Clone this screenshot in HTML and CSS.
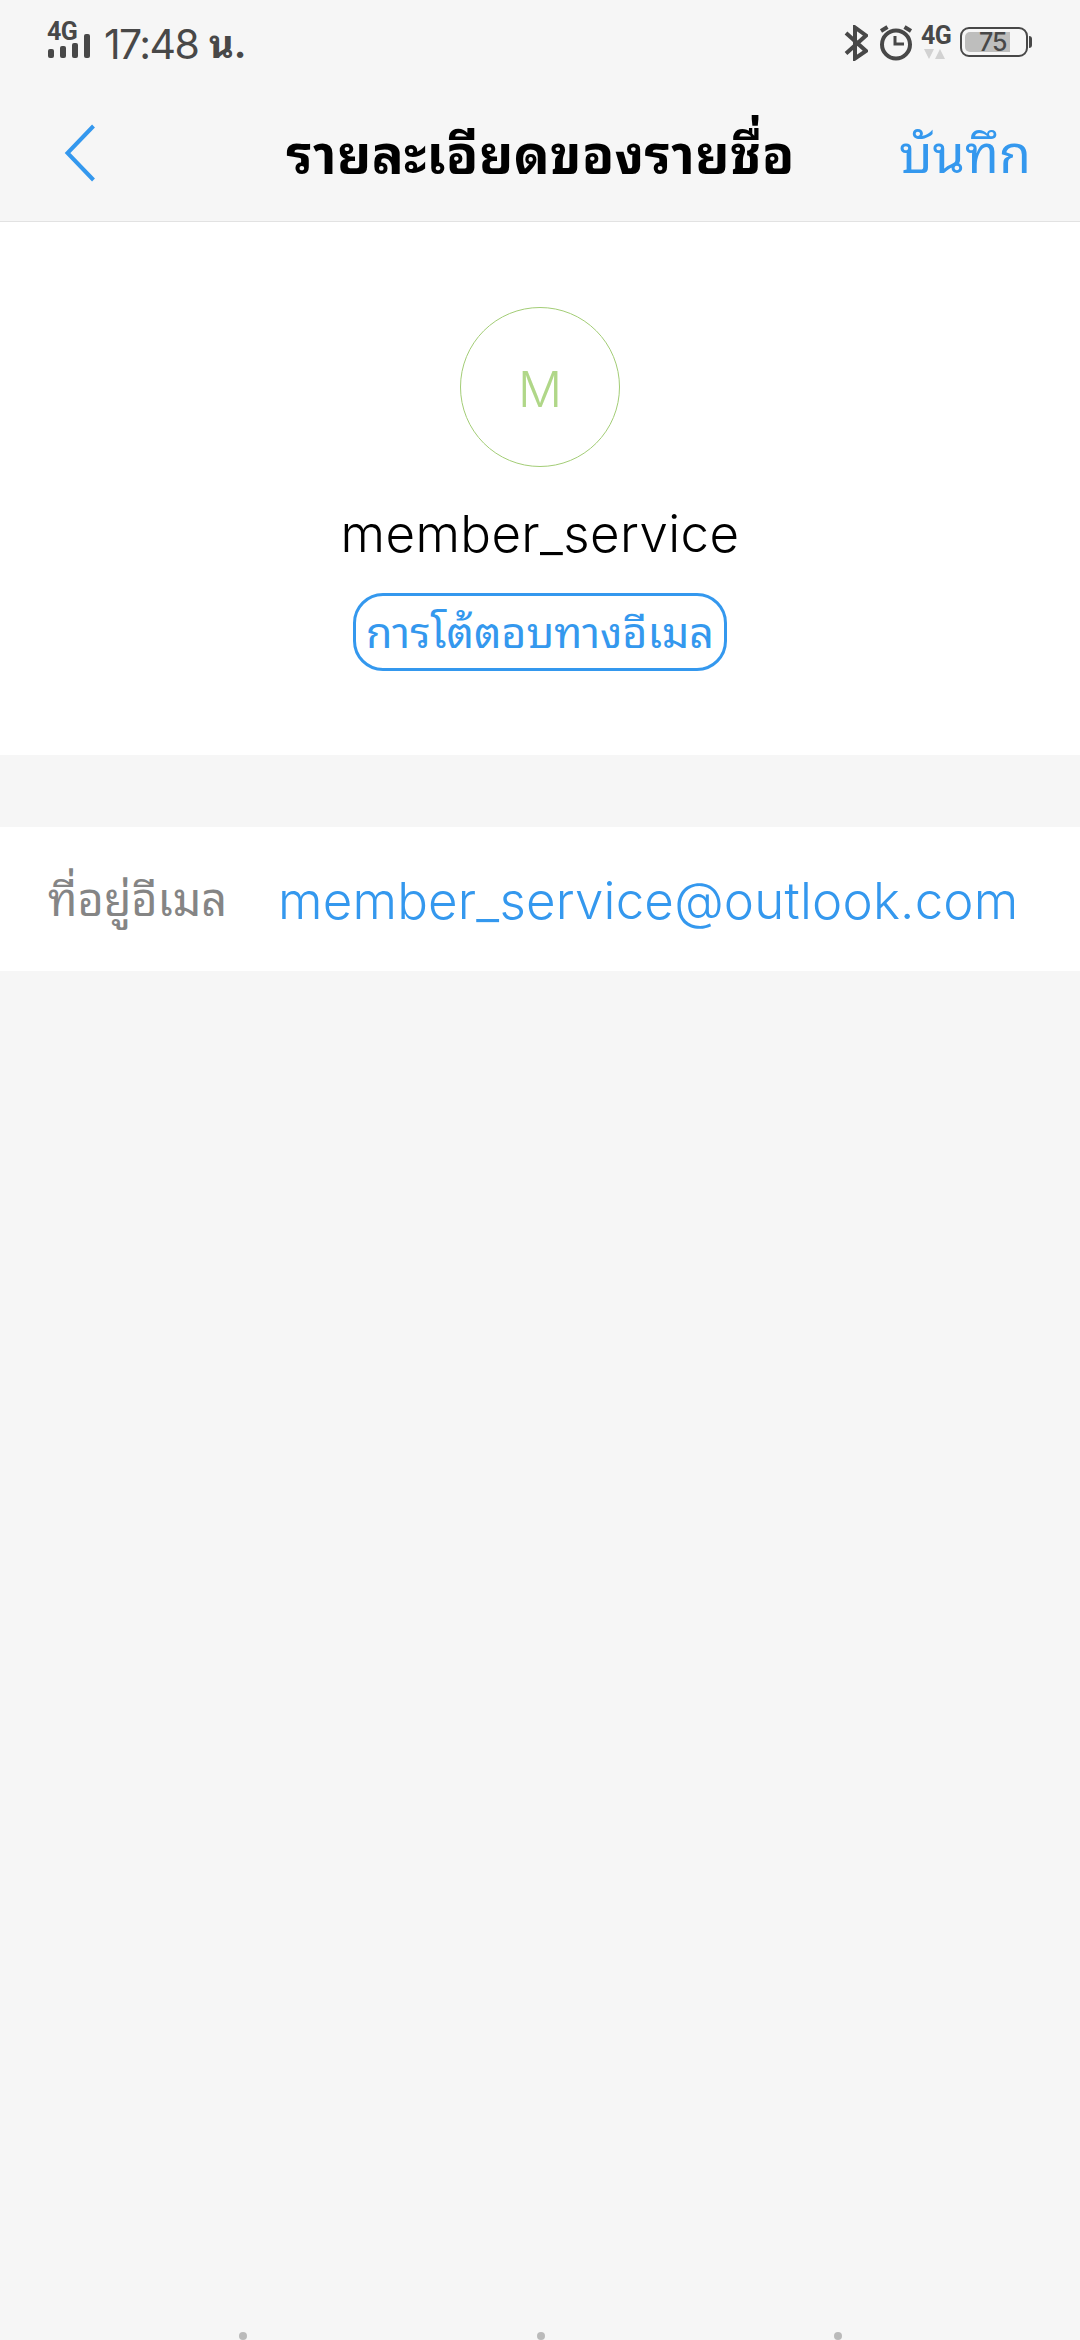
FILE: index.html
```html
<!DOCTYPE html>
<html lang="th">
  <head>
    <meta charset="UTF-8" />
    <meta name="viewport" content="width=device-width, initial-scale=1.0" />
    <title>รายละเอียดของรายชื่อ</title>
    <link rel="stylesheet" href="styles.css">
  </head>
  <body>
    <div class="screen">
      <div class="status-bar">
        <div class="signal">
          <span class="network">4G</span>
          <svg class="bars" width="42" height="24" viewBox="0 0 42 24">
            <rect x="0" y="15" width="6" height="9" rx="2" />
            <rect x="12" y="12" width="6" height="12" rx="2" />
            <rect x="24" y="9" width="6" height="15" rx="2" />
            <rect x="36" y="0" width="6" height="24" rx="2" />
          </svg>
        </div>
        <span class="time">17:48</span>
        <span class="time-unit">น.</span>
        <div class="status-icons">
          <svg class="bluetooth" width="24" height="36" viewBox="0 0 24 36">
            <path d="M2 8 L22 26 L11 33.5 V2.5 L22 10.5 L2 28.5" />
          </svg>
          <svg class="alarm" width="34" height="36" viewBox="0 0 34 36">
            <circle cx="17" cy="19.5" r="14" />
            <path d="M16 11 V19 H25" stroke-width="3" />
            <path d="M2 6 L8.500 2 M32 6 L25.500 2" />
          </svg>
          <div class="data">
            <span class="network">4G</span>
            <svg width="22" height="10" viewBox="0 0 22 10">
              <path d="M0 0 H10 L5 10 Z M11 10 H21 L16 0 Z" />
            </svg>
          </div>
          <div class="battery"><span class="level">75</span></div>
          <span class="battery-cap"></span>
        </div>
      </div>

      <header class="header">
        <svg class="back" width="32" height="58" viewBox="0 0 32 58">
          <path d="M29.500 2 L3.500 29 L29.500 56" />
        </svg>
        <h1>รายละเอียดของรายชื่อ</h1>
        <a class="save">บันทึก</a>
      </header>

      <section class="profile">
        <div class="avatar">M</div>
        <div class="name">member_service</div>
        <button class="mail-button">การโต้ตอบทางอีเมล</button>
      </section>

      <section class="row">
        <span class="label">ที่อยู่อีเมล</span>
        <a class="email">member_service@outlook.com</a>
      </section>

      <footer class="nav-dots">
        <span></span>
        <span></span>
        <span></span>
      </footer>
    </div>
  </body>
</html>
```
FILE: styles.css
```css
:root {
  --blue: #3498ee;
  --green: #b0d788;
  --background: #f6f6f6;
  --status: #484848;
}
* {
  box-sizing: border-box;
}
body {
  margin: 0;
  background: var(--background);
  font-family: Inter, "Noto Sans Thai Looped", Loma, "Noto Sans Thai", "Noto Sans", sans-serif;
}
.screen {
  display: flex;
  flex-direction: column;
  width: 1080px;
  height: 2340px;
  overflow: hidden;
}
.status-bar {
  display: flex;
  height: 84px;
  padding: 0 48px;
  color: var(--status);
}
.signal {
  width: 42px;
  padding-top: 22px;
}
.network {
  display: block;
  height: 20px;
  font-family: Roboto, sans-serif;
  font-size: 25px;
  font-weight: 700;
  line-height: 20px;
  letter-spacing: -0.5px;
}
.signal .network {
  margin-left: -1px;
}
.bars {
  display: block;
  margin-top: -8px;
  fill: var(--status);
}
.time {
  width: 104px;
  padding-left: 14px;
  font-size: 41px;
  line-height: 88px;
  letter-spacing: -1.6px;
  white-space: nowrap;
}
.time-unit {
  padding-left: 15px;
  font-size: 38px;
  font-weight: 700;
  line-height: 88px;
}
.status-icons {
  display: flex;
  align-items: flex-start;
  margin-left: auto;
  padding-top: 25px;
}
.status-icons svg {
  display: block;
  fill: none;
  stroke: var(--status);
  stroke-width: 4;
}
.alarm {
  margin-left: 11px;
}
.data {
  width: 30px;
  margin: 1px 0 0 8px;
}
.status-icons .data svg {
  margin: 3px 0 0 3px;
  fill: #d2d2d2;
  stroke: none;
}
.battery {
  width: 68px;
  height: 30px;
  margin: 2px 0 0 9px;
  padding: 3px;
  border: 2px solid var(--status);
  border-radius: 9px;
}
.level {
  display: block;
  width: 45px;
  height: 20px;
  padding-left: 14px;
  border-radius: 5px 0 0 5px;
  background: #bebebd;
  font-size: 25px;
  font-weight: 500;
  line-height: 20px;
  letter-spacing: -1px;
}
.battery-cap {
  width: 3px;
  height: 12px;
  margin: 11px 0 0 1px;
  border-radius: 0 3px 3px 0;
  background: var(--status);
}
.header {
  display: grid;
  grid-template-columns: 200px 1fr 200px;
  align-items: center;
  height: 138px;
  padding: 0 49px 0 64px;
  border-bottom: 1px solid #e2e2e2;
}
.back {
  fill: none;
  stroke: var(--blue);
  stroke-width: 4;
}
h1 {
  margin: 0 14px 0 0;
  padding-top: 5px;
  font-size: 53px;
  font-weight: 700;
  line-height: 80px;
  letter-spacing: 0.4px;
  text-align: center;
  white-space: nowrap;
}
.save {
  padding-top: 5px;
  color: var(--blue);
  font-size: 52px;
  line-height: 80px;
  text-align: right;
}
.profile {
  display: flex;
  flex-direction: column;
  align-items: center;
  height: 533px;
  padding-top: 85px;
  background: #fff;
}
.avatar {
  width: 160px;
  height: 160px;
  border: 1px solid #a3cd76;
  border-radius: 50%;
  color: var(--green);
  font-size: 49px;
  font-weight: 350;
  line-height: 163px;
  text-align: center;
}
.name {
  height: 80px;
  margin-top: 27px;
  font-size: 51px;
  font-weight: 350;
  line-height: 80px;
  letter-spacing: 0.4px;
}
.mail-button {
  width: 374px;
  height: 78px;
  margin-top: 19px;
  padding: 0 0 1px;
  border: 3px solid var(--blue);
  border-radius: 30px;
  background: #fff;
  color: var(--blue);
  font-family: inherit;
  font-size: 43px;
  line-height: 60px;
  white-space: nowrap;
}
.row {
  display: flex;
  align-items: center;
  height: 144px;
  margin-top: 72px;
  padding-left: 48px;
  background: #fff;
}
.label {
  width: 230px;
  padding-bottom: 7px;
  color: #858585;
  font-size: 45px;
}
.email {
  padding-top: 3px;
  color: var(--blue);
  font-size: 51px;
  font-weight: 350;
  letter-spacing: 0.2px;
}
.nav-dots {
  display: flex;
  justify-content: space-between;
  margin-top: auto;
  padding: 0 238px 0 239px;
}
.nav-dots span {
  width: 8px;
  height: 8px;
  border-radius: 50%;
  background: #bababa;
}
```
